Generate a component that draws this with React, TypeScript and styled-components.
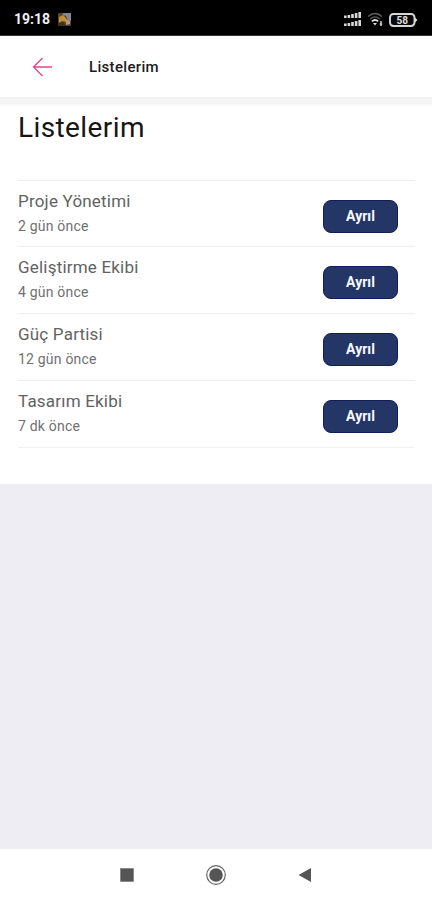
import React from "react";
import styled, { createGlobalStyle } from "styled-components";

const GlobalStyle = createGlobalStyle`
  * { box-sizing: border-box; }
  body { margin: 0; background: #eeedf3; font-family: Roboto, "Liberation Sans", sans-serif; }
  h1, h2, p, ul { margin: 0; padding: 0; font-weight: 400; }
`;

const Screen = styled.div`
  display: flex;
  flex-direction: column;
  width: 432px;
  height: 900px;
  overflow: hidden;
  background: #eeedf3;
`;

const StatusBar = styled.header`
  display: flex;
  justify-content: space-between;
  flex: none;
  height: 36px;
  padding: 11px 14px 0;
  background: #000;
  border-bottom: 1px solid #3a3a3a;
`;

const StatusGroup = styled.div<{ $gap: number }>`
  display: flex;
  align-items: center;
  gap: ${(p) => p.$gap}px;
  height: 17px;
`;

const Clock = styled.span`
  width: 36px;
  color: #f2f2f2;
  font-size: 14px;
  font-weight: 700;
  line-height: 17px;
  white-space: nowrap;
`;

const AppBar = styled.nav`
  display: flex;
  align-items: center;
  flex: none;
  height: 61px;
  padding-left: 32px;
  background: #fff;
`;

const BackButton = styled.button`
  display: flex;
  width: 57px;
  padding: 0;
  border: 0;
  background: none;
`;

const AppBarTitle = styled.h2`
  color: #1c1c1c;
  font-size: 15px;
  font-weight: 500;
  line-height: 20px;
  letter-spacing: 0.32px;
`;

const Shade = styled.div`
  flex: none;
  height: 9px;
  background: linear-gradient(#f4f4f4 0 7px, #fbfbfb 7px);
`;

const Panel = styled.main`
  flex: none;
  height: 378px;
  padding: 5px 17px 0 18px;
  background: #fff;
`;

const Title = styled.h1`
  height: 69px;
  color: #151515;
  font-size: 28px;
  line-height: 34px;
  letter-spacing: 0.4px;
`;

const List = styled.ul`
  list-style: none;
  border-top: 1px solid #efefef;
`;

const Row = styled.li`
  display: flex;
  justify-content: space-between;
  height: 67px;
  padding: 8px 17px 0 0;
  border-bottom: 1px solid #efefef;
  &:first-child { height: 66px; }
`;

const Name = styled.p`
  color: #626262;
  font-size: 17px;
  line-height: 24px;
  letter-spacing: 0.2px;
`;

const Time = styled.p`
  margin-top: 3px;
  color: #707070;
  font-size: 14px;
  line-height: 20px;
  letter-spacing: 0.2px;
`;

const LeaveButton = styled.button`
  width: 75px;
  height: 33px;
  margin-top: 11px;
  padding: 0 0 2px;
  border: 1px solid #141c5c;
  border-radius: 8px;
  background: #243665;
  color: #f8f9ff;
  font: 700 14px/20px Roboto, "Liberation Sans", sans-serif;
`;

const SystemNav = styled.footer`
  display: flex;
  align-items: center;
  justify-content: space-between;
  flex: none;
  height: 51px;
  margin-top: auto;
  padding: 0 120px;
  background: #fff;
`;

const lists = [
  { name: "Proje Yönetimi", time: "2 gün önce" },
  { name: "Geliştirme Ekibi", time: "4 gün önce" },
  { name: "Güç Partisi", time: "12 gün önce" },
  { name: "Tasarım Ekibi", time: "7 dk önce" },
];

const NoticeIcon = () => (
  <svg width="13" height="13" viewBox="0 0 13 13">
    <rect width="13" height="13" rx="1" fill="#564431" />
    <path d="M5 0h8v8l-3-1-2-4-3-1z" fill="#8b8591" />
    <path d="M1 4l4-2 3 3 1 4-5-1-3 2z" fill="#c09032" />
    <path d="M8 6l4 2v3l-4 1z" fill="#b69787" />
    <path d="M0 10l5-1 3 4H0z" fill="#41301e" />
  </svg>
);

const SignalIcon = () => (
  <svg width="18" height="15" viewBox="0 0 18 15" fill="#d6d6d6">
    {[0, 8].map((y) => (
      <g key={y}>
        <rect x="0" y={y + 3.5} width="2.6" height="2.5" />
        <rect x="3.6" y={y + 3} width="2.6" height="3" />
        <rect x="7.2" y={y + 2} width="2.6" height="4" />
        <rect x="10.8" y={y + 1} width="2.6" height="5" />
        <rect x="14.4" y={y} width="2.6" height="6" />
      </g>
    ))}
  </svg>
);

const WifiIcon = () => (
  <svg width="17" height="15" viewBox="0 0 17 15" fill="none">
    <path d="M1 4.5Q8 -1.5 15 4.5" stroke="#606060" strokeWidth="1.5" />
    <path d="M3 7.2Q8 3 13 7.2" stroke="#505050" strokeWidth="1.4" />
    <path d="M4.8 9.4Q8 6.5 11.2 9.4" stroke="#ddd" strokeWidth="1.8" />
    <path d="M6 11h4l-2 2.5z" fill="#ddd" />
    <path d="M14 9v5M12.7 12.2h2.6" stroke="#bbb" strokeWidth="1.7" />
  </svg>
);

const BatteryIcon = () => (
  <svg width="29" height="14" viewBox="0 0 29 14">
    <rect x="1" y="1" width="24.5" height="12" rx="3.4" fill="#080808" stroke="#d8d8d8" strokeWidth="1.9" />
    <path d="M26 4.5l2.5 2.5-2.5 2.5z" fill="#d8d8d8" />
    <text x="13.2" y="10.6" textAnchor="middle" fontSize="10" fontWeight="700" fill="#ddd">58</text>
  </svg>
);

const BackIcon = () => (
  <svg width="21" height="20" viewBox="0 0 21 20" fill="none" stroke="#df4a86" strokeWidth="1.35">
    <path d="M10.5 1L1.5 10l9 9M1.5 10H20" />
  </svg>
);

export default function App() {
  return (
    <>
      <GlobalStyle />
      <Screen>
        <StatusBar>
          <StatusGroup $gap={8}>
            <Clock>19:18</Clock>
            <NoticeIcon />
          </StatusGroup>
          <StatusGroup $gap={5}>
            <SignalIcon />
            <WifiIcon />
            <BatteryIcon />
          </StatusGroup>
        </StatusBar>
        <AppBar>
          <BackButton aria-label="Geri"><BackIcon /></BackButton>
          <AppBarTitle>Listelerim</AppBarTitle>
        </AppBar>
        <Shade />
        <Panel>
          <Title>Listelerim</Title>
          <List>
            {lists.map((item) => (
              <Row key={item.name}>
                <div>
                  <Name>{item.name}</Name>
                  <Time>{item.time}</Time>
                </div>
                <LeaveButton>Ayrıl</LeaveButton>
              </Row>
            ))}
          </List>
        </Panel>
        <SystemNav>
          <svg width="14" height="14" viewBox="0 0 14 14">
            <rect x="0.5" y="0.5" width="13" height="13" fill="#555" stroke="#777" strokeWidth="0.6" />
          </svg>
          <svg width="22" height="22" viewBox="0 0 22 22">
            <circle cx="11" cy="11" r="9.3" fill="none" stroke="#666" strokeWidth="1.2" />
            <circle cx="11" cy="11" r="6.8" fill="#555" />
          </svg>
          <svg width="14" height="16" viewBox="0 0 14 16">
            <path d="M0.5 8L13 1v14z" fill="#555" />
          </svg>
        </SystemNav>
      </Screen>
    </>
  );
}
